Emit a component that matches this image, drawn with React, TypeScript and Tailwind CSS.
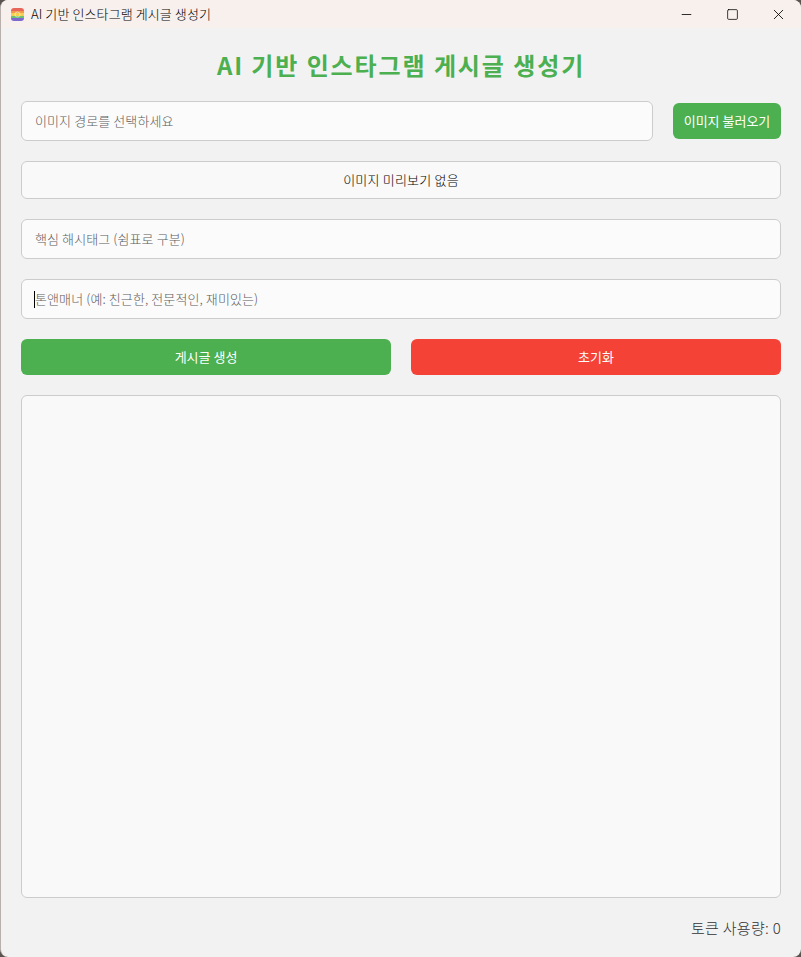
import { Minus, Square, X } from "lucide-react"

const font = "font-['Noto_Sans_CJK_KR','Liberation_Sans',sans-serif]"

function TextField({ placeholder, caret = false }: { placeholder: string; caret?: boolean }) {
    return (
        <div className="relative flex h-10 flex-1 items-center rounded-md border border-[#cccccc] bg-[#fbfbfb] px-[13px] text-[13px] font-light tracking-[0.1px] text-[#5c5c5c]">
            {caret && <span className="absolute left-[12px] top-[11px] h-[17px] w-px bg-black" />}
            <span>{placeholder}</span>
        </div>
    )
}

function AppIcon() {
    return (
        <svg width="13" height="13" viewBox="0 0 13 13" className="shrink-0">
            <defs>
                <clipPath id="app-icon-clip">
                    <rect width="13" height="13" rx="3" />
                </clipPath>
            </defs>
            <g clipPath="url(#app-icon-clip)">
                <rect width="13" height="3" fill="#e8655a" />
                <rect y="3" width="13" height="2" fill="#f09a4a" />
                <rect y="5" width="13" height="3" fill="#f5d04e" />
                <rect y="8" width="13" height="2" fill="#6cc070" />
                <rect y="10" width="13" height="3" fill="#7d68cf" />
            </g>
            <circle cx="6.5" cy="6.5" r="2.5" fill="none" stroke="#fff" strokeOpacity="0.55" />
        </svg>
    )
}

export default function App() {
    return (
        <div className={`h-[957px] w-[801px] bg-[#5b5350] ${font}`}>
            <div className="flex h-full flex-col overflow-hidden rounded-lg border-l border-[#b8b0ac] bg-[#f2f2f2]">
                {/* Title bar */}
                <div className="flex h-7 shrink-0 items-center bg-[#f8f0ed] pl-[10px]">
                    <AppIcon />
                    <span className="ml-[7px] text-[13px] font-light tracking-[0.1px] text-black">AI 기반 인스타그램 게시글 생성기</span>
                    <div className="ml-auto flex h-full items-center">
                        <div className="flex w-[46px] justify-center"><Minus size={15} strokeWidth={1.3} color="#000" /></div>
                        <div className="flex w-[46px] justify-center"><Square size={13} strokeWidth={1.4} color="#000" /></div>
                        <div className="flex w-[46px] justify-center"><X size={17} strokeWidth={1.2} color="#000" /></div>
                    </div>
                </div>

                <div className="flex flex-1 flex-col px-5 pb-[19px]">
                    <h1 className="mb-[18px] mt-[19px] text-center text-2xl leading-9 font-bold tracking-[1.9px] text-[#4caf50]">
                        AI 기반 인스타그램 게시글 생성기
                    </h1>

                    <div className="flex items-center gap-5">
                        <TextField placeholder="이미지 경로를 선택하세요" />
                        <button className="h-9 w-[108px] rounded-md bg-[#4caf50] text-[13px] text-white">이미지 불러오기</button>
                    </div>

                    <div className="mt-5 flex h-[38px] items-center justify-center rounded-md border border-[#cccccc] bg-[#f9f9f9] text-[13px] font-light tracking-[0.2px] text-black">
                        이미지 미리보기 없음
                    </div>

                    <div className="mt-5 flex"><TextField placeholder="핵심 해시태그 (쉼표로 구분)" /></div>
                    <div className="mt-5 flex"><TextField placeholder="톤앤매너 (예: 친근한, 전문적인, 재미있는)" caret /></div>

                    <div className="mt-5 flex gap-5">
                        <button className="h-9 flex-1 rounded-md bg-[#4caf50] text-[13px] text-white">게시글 생성</button>
                        <button className="h-9 flex-1 rounded-md bg-[#f44336] text-[13px] text-white">초기화</button>
                    </div>

                    <div className="mt-5 flex-1 rounded-md border border-[#cccccc] bg-[#f9f9f9]" />

                    <div className="mt-5 text-right text-[15px] leading-5 font-light tracking-[0.3px] text-[#333333]">토큰 사용량: 0</div>
                </div>
            </div>
        </div>
    )
}
